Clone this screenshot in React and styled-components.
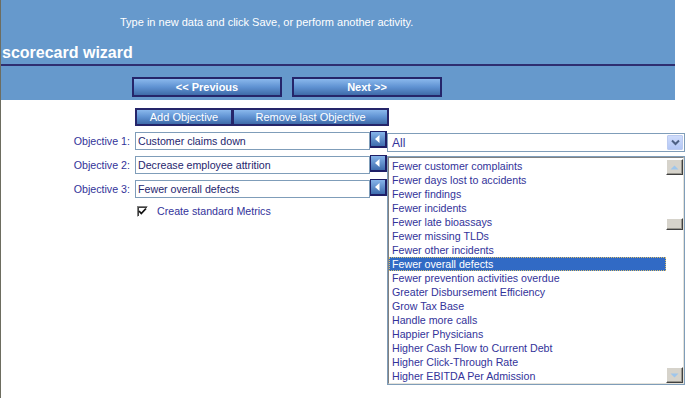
import styled, { createGlobalStyle } from "styled-components";

const GlobalStyle = createGlobalStyle`
    html, body {
        margin: 0;
        padding: 0;
        background: #fff;
    }
    body {
        font-family: Arial, "Liberation Sans", sans-serif;
    }
`

const objectives = [
    "Customer claims down",
    "Decrease employee attrition",
    "Fewer overall defects",
]

const options = [
    "Fewer customer complaints",
    "Fewer days lost to accidents",
    "Fewer findings",
    "Fewer incidents",
    "Fewer late bioassays",
    "Fewer missing TLDs",
    "Fewer other incidents",
    "Fewer overall defects",
    "Fewer prevention activities overdue",
    "Greater Disbursement Efficiency",
    "Grow Tax Base",
    "Handle more calls",
    "Happier Physicians",
    "Higher Cash Flow to Current Debt",
    "Higher Click-Through Rate",
    "Higher EBITDA Per Admission",
]

const LeftArrow = () => (
    <svg width="5" height="8" viewBox="0 0 5 8">
        <polygon points="4.5,0 0,4 4.5,8" fill="#fff" />
    </svg>
)

const Chevron = () => (
    <svg width="9" height="7" viewBox="0 0 9 7">
        <polyline points="1,1.5 4.5,5 8,1.5" fill="none" stroke="#4d6185" strokeWidth="2" />
    </svg>
)

const Tri = ({ up }) => (
    <svg width="9" height="5" viewBox="0 0 9 5">
        <polygon points={up ? "0.5,4.5 4.5,0.5 8.5,4.5" : "0.5,0.5 4.5,4.5 8.5,0.5"} fill="#9ec6ec" />
    </svg>
)

const Check = () => (
    <svg width="9" height="9" viewBox="0 0 9 9">
        <polyline points="1,4 3.3,6.5 8,1.5" fill="none" stroke="#111" strokeWidth="1.8" />
    </svg>
)

export default () => (
    <Page>
        <GlobalStyle />
        <Header>
            <HelpText>Type in new data and click Save, or perform another activity.</HelpText>
            <Title>scorecard wizard</Title>
            <Rule />
            <Nav>
                <NavButton>&lt;&lt; Previous</NavButton>
                <NavButton>Next &gt;&gt;</NavButton>
            </Nav>
        </Header>

        <ObjButtons>
            <ObjButton $w={98}>Add Objective</ObjButton>
            <ObjButton $w={157} $joined>Remove last Objective</ObjButton>
        </ObjButtons>

        <Rows>
            {objectives.map((o, i) => (
                <Row key={o}>
                    <Label>Objective {i + 1}:</Label>
                    <TextInput readOnly value={o} />
                    <ArrowButton><LeftArrow /></ArrowButton>
                    {i === 0 && (
                        <SelectWrap>
                            <SelectBox>
                                <SelectText>All</SelectText>
                                <DropButton><Chevron /></DropButton>
                            </SelectBox>
                            <ListBox>
                                <ListInner>
                                    <Items>
                                        {options.map(opt => (
                                            <Item key={opt} $selected={opt === "Fewer overall defects"}>{opt}</Item>
                                        ))}
                                    </Items>
                                    <ScrollBar>
                                        <ScrollButton><Tri up /></ScrollButton>
                                        <Thumb />
                                        <ScrollButton $bottom><Tri /></ScrollButton>
                                    </ScrollBar>
                                </ListInner>
                            </ListBox>
                        </SelectWrap>
                    )}
                </Row>
            ))}
        </Rows>

        <CheckRow>
            <CheckBox><Check /></CheckBox>
            <CheckLabel>Create standard Metrics</CheckLabel>
        </CheckRow>
    </Page>
)

const Page = styled.div`
    min-height: 100vh;
    box-sizing: border-box;
    border-left: 1px solid #6d6d60;
`

const Header = styled.div`
    width: 674px;
    height: 100px;
    box-sizing: border-box;
    padding-top: 15px;
    background: #6699cc;
`

const HelpText = styled.div`
    padding-left: 119px;
    color: #fff;
    font-size: 11px;
    line-height: 14px;
`

const Title = styled.div`
    margin-top: 14px;
    padding-left: 1px;
    color: #fff;
    font-size: 16px;
    font-weight: bold;
    line-height: 20px;
`

const Rule = styled.div`
    margin-top: 1px;
    height: 2px;
    background: #2e2e70;
`

const Nav = styled.div`
    display: flex;
    gap: 10px;
    margin-top: 11px;
    padding-left: 131px;
`

const btnFace = `
    box-sizing: border-box;
    border: 2px solid #25256a;
    background: linear-gradient(to bottom, #8ab8ec 0%, #5f92d2 50%, #3f6ba9 100%);
    color: #fff;
    font-family: Arial, "Liberation Sans", sans-serif;
    padding: 0;
    cursor: pointer;
`

const NavButton = styled.button`
    ${btnFace}
    width: 150px;
    height: 20px;
    font-size: 11px;
    font-weight: bold;
`

const ObjButtons = styled.div`
    display: flex;
    margin-top: 8px;
    padding-left: 134px;
`

const ObjButton = styled.button`
    ${btnFace}
    width: ${p => p.$w}px;
    height: 18px;
    font-size: 11px;
    margin-left: ${p => (p.$joined ? "-1px" : "0")};
`

const Rows = styled.div`
    display: flex;
    flex-direction: column;
    gap: 6px;
    margin-top: 6px;
`

const Row = styled.div`
    display: flex;
    align-items: flex-start;
    height: 18px;
`

const Label = styled.div`
    width: 134px;
    box-sizing: border-box;
    padding-right: 5px;
    text-align: right;
    color: #333399;
    font-size: 8pt;
    line-height: 18px;
`

const TextInput = styled.input`
    width: 235px;
    height: 18px;
    box-sizing: border-box;
    margin: 0;
    border: 1px solid #7f9db9;
    padding: 0 2px;
    color: #26266e;
    font-family: Arial, "Liberation Sans", sans-serif;
    font-size: 8pt;
    outline: none;
`

const ArrowButton = styled.div`
    width: 17px;
    height: 17px;
    margin-top: -1px;
    box-sizing: border-box;
    display: flex;
    justify-content: center;
    align-items: flex-start;
    padding-top: 3px;
    padding-right: 2px;
    border: 1px solid #1e1e66;
    border-right-width: 2px;
    border-bottom-width: 2px;
    background: linear-gradient(to bottom, #86b4ea, #3e6cae);
`

const SelectWrap = styled.div`
    position: relative;
    margin-top: 1px;
`

const SelectBox = styled.div`
    width: 298px;
    height: 19px;
    box-sizing: border-box;
    display: flex;
    align-items: center;
    border: 1px solid #7f9db9;
    background: #fff;
`

const SelectText = styled.span`
    flex: 1;
    padding-left: 4px;
    color: #33339a;
    font-size: 12px;
`

const DropButton = styled.div`
    width: 16px;
    height: 15px;
    margin-right: 1px;
    box-sizing: border-box;
    display: flex;
    align-items: center;
    justify-content: center;
    border: 1px solid #bccbf0;
    border-radius: 1px;
    background: linear-gradient(to bottom, #cfdcfb, #b3c7f6);
`

const ListBox = styled.div`
    position: absolute;
    top: 23px;
    left: 0;
    z-index: 2;
    width: 298px;
    height: 229px;
    box-sizing: border-box;
    display: flex;
    border: 1px solid #7f9db9;
    background: #fff;
`

const ListInner = styled.div`
    flex: 1;
    display: flex;
    border-top: 1px solid #808080;
    border-left: 1px solid #808080;
    border-right: 1px solid #e4e2da;
    border-bottom: 1px solid #e4e2da;
`

const Items = styled.div`
    flex: 1;
    padding-top: 1px;
    overflow: hidden;
`

const Item = styled.div`
    height: 14px;
    box-sizing: border-box;
    padding-left: 3px;
    line-height: 14px;
    white-space: nowrap;
    font-size: 8pt;
    color: ${p => (p.$selected ? "#fff" : "#33339a")};
    background: ${p => (p.$selected ? "#316ac5" : "transparent")};
    outline: ${p => (p.$selected ? "1px dotted #d8c070" : "none")};
    outline-offset: -1px;
`

const ScrollBar = styled.div`
    width: 17px;
    display: flex;
    flex-direction: column;
    padding-top: 1px;
`

const ScrollButton = styled.div`
    width: 17px;
    height: 16px;
    box-sizing: border-box;
    display: flex;
    align-items: center;
    justify-content: center;
    margin-top: ${p => (p.$bottom ? "auto" : "0")};
    border: 1px solid;
    border-color: #fff #404040 #404040 #fff;
    box-shadow: inset -1px -1px #9a9890;
    background: #d6d3cb;
`

const Thumb = styled.div`
    width: 17px;
    height: 12px;
    margin-top: 43px;
    box-sizing: border-box;
    border: 1px solid;
    border-color: #fff #404040 #404040 #fff;
    box-shadow: inset -1px -1px #9a9890;
    background: #d6d3cb;
`

const CheckRow = styled.div`
    display: flex;
    align-items: center;
    margin-top: 7px;
    padding-left: 136px;
`

const CheckBox = styled.div`
    width: 11px;
    height: 11px;
    box-sizing: border-box;
    display: flex;
    align-items: center;
    justify-content: center;
    border: 1px solid;
    border-color: #808080 #fff #fff #808080;
    box-shadow: inset 1px 1px #404040;
    background: #fff;
`

const CheckLabel = styled.span`
    margin-left: 9px;
    color: #33339a;
    font-size: 8pt;
    line-height: 13px;
`
